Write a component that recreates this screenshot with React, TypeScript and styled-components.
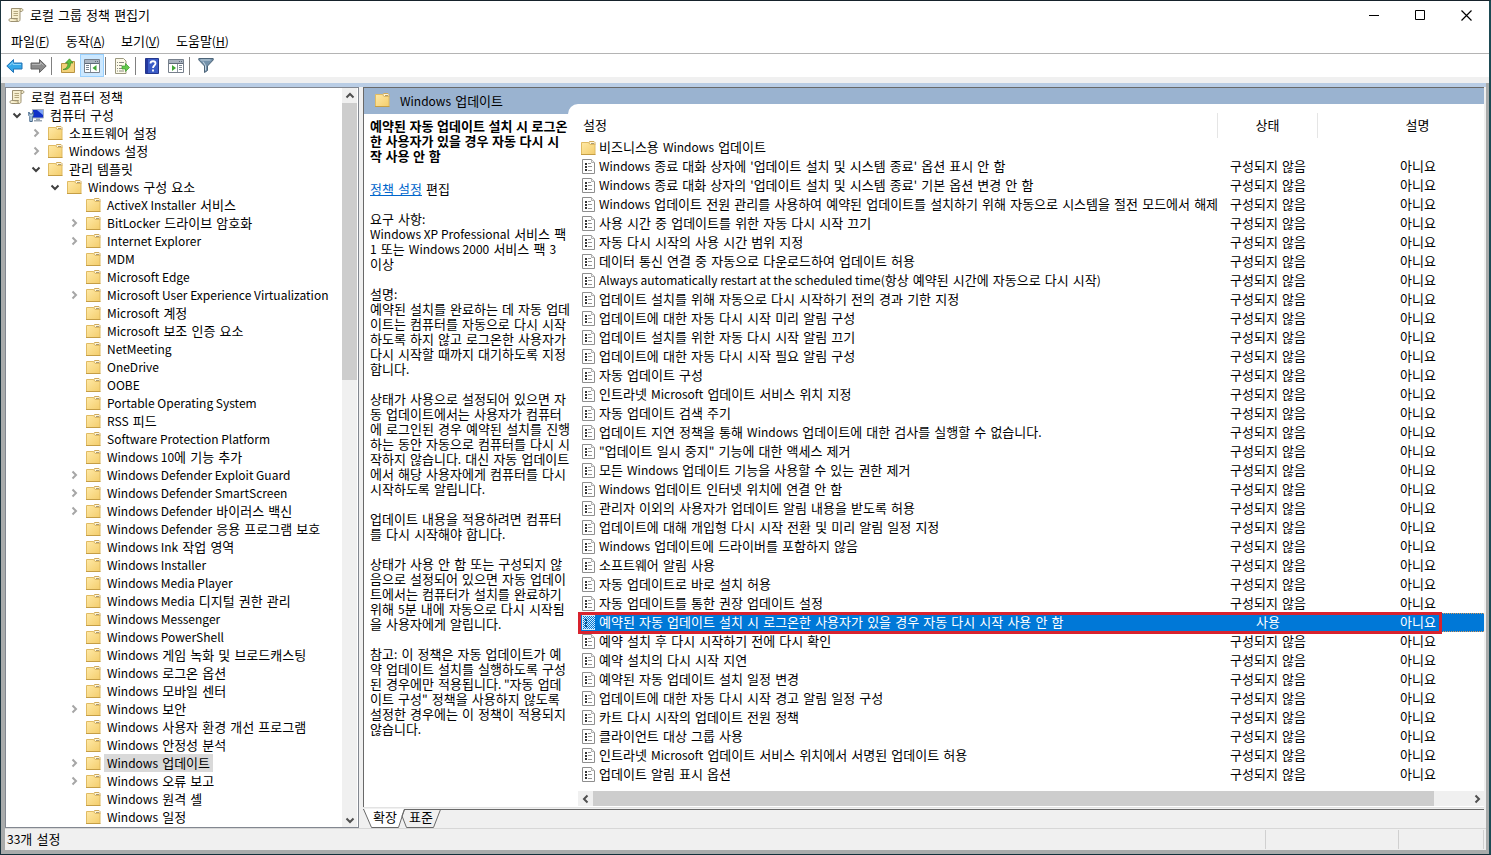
import React from "react";
import styled, { createGlobalStyle, css } from "styled-components";

const Global = createGlobalStyle`
  * { box-sizing: border-box; }
  html, body, #root { height: 100%; margin: 0; }
  body { overflow: hidden; }
  body, button {
    font-family: "DejaVu Sans", "Noto Sans CJK KR", sans-serif;
    font-size: 13px;
    color: #000;
  }
  button { border: 0; background: none; padding: 0; margin: 0; }
  svg { display: block; flex: none; }
`;

const Latin = styled.span`
  font-family: "Noto Sans CJK KR", sans-serif;
  font-size: 12px;
  line-height: 12px;
`;

const Window = styled.div`
  height: 100vh;
  display: flex;
  flex-direction: column;
  background: #fff;
  border-style: solid;
  border-width: 1px 2px 1px 1px;
  border-color: #16222b #1d4a54 #12303a #1c3540;
`;

const TitleBar = styled.header`
  height: 28px;
  flex: none;
  display: flex;
  align-items: center;
  padding-left: 7px;
`;

const Title = styled.h1`
  margin: 0;
  padding: 2px 0 0 6px;
  flex: 1;
  font-size: 13px;
  font-weight: 400;
  line-height: 18px;
`;

const Caption = styled.button`
  width: 46px;
  height: 28px;
  display: flex;
  align-items: center;
  justify-content: center;
`;

const MenuBar = styled.nav`
  height: 25px;
  flex: none;
  display: flex;
  padding-left: 2px;
  border-bottom: 1px solid #b4b4b4;
`;

const MenuButton = styled.button`
  padding: 2px 8px 0;
  line-height: 22px;
`;

const ToolBar = styled.div`
  height: 23px;
  flex: none;
  display: flex;
  align-items: center;
  padding-left: 1px;
`;

const Tool = styled.button<{ $on?: boolean }>`
  width: 24px;
  height: 23px;
  display: flex;
  align-items: center;
  justify-content: center;
  ${(p) => p.$on && css`background: #cce8ff; border: 1px solid #99d1ff;`}
`;

const ToolSep = styled.span`
  width: 1px;
  height: 18px;
  margin: 0 4px 0 1px;
  background: #808080;
`;

const Rebar = styled.div`
  height: 6px;
  flex: none;
  background: #f0f0f0;
`;

const Frame = styled.div`
  flex: 1;
  min-height: 0;
  display: flex;
  flex-direction: column;
  background: #f0f0f0;
  border: solid #a9abab;
  border-width: 0 3px 4px 4px;
`;

const BlueEdge = styled.div`
  height: 4px;
  flex: none;
  background: #b9cde5;
`;

const Body = styled.main`
  flex: 1;
  min-height: 0;
  display: flex;
  gap: 4px;
  padding-right: 2px;
`;

const TreePane = styled.section`
  width: 354px;
  flex: none;
  display: flex;
  padding-right: 1px;
  background: #fff;
  border: 1px solid #828790;
`;

const Tree = styled.ul`
  flex: 1;
  min-width: 0;
  margin: 0;
  padding: 0;
  list-style: none;
  overflow: hidden;
`;

const TreeItem = styled.li<{ $level: number }>`
  height: 18px;
  display: flex;
  align-items: center;
  padding-left: ${(p) => (p.$level ? p.$level * 19 - 18 : 3)}px;
  white-space: nowrap;
`;

const Twisty = styled.span`
  width: 19px;
  margin-right: 2px;
  display: flex;
  justify-content: center;
`;

const TreeLabel = styled.span<{ $selected?: boolean }>`
  margin-left: 3px;
  padding: 2px 3px 0;
  line-height: 16px;
  background: ${(p) => (p.$selected ? "#d9d9d9" : "transparent")};
`;

const ScrollBar = styled.div<{ $horizontal?: boolean }>`
  display: flex;
  flex: none;
  background: #f0f0f0;
  ${(p) =>
    p.$horizontal
      ? css`height: 15px;`
      : css`flex-direction: column; width: 15px;`}
`;

const ScrollArrow = styled.button`
  flex: none;
  min-width: 15px;
  height: 15px;
  display: flex;
  align-items: center;
  justify-content: center;
`;

const Track = styled.div<{ $horizontal?: boolean }>`
  flex: 1;
  display: flex;
  flex-direction: ${(p) => (p.$horizontal ? "row" : "column")};
`;

const Thumb = styled.div<{ $share: number }>`
  flex: 0 0 ${(p) => p.$share}%;
  background: #cdcdcd;
`;

const ResultPane = styled.section`
  flex: 1;
  min-width: 0;
  display: flex;
  flex-direction: column;
`;

const Sheet = styled.div`
  flex: 1;
  min-height: 0;
  display: flex;
  background: #9ab3d0;
  border: solid #696969;
  border-width: 1px 0 0 1px;
`;

const Detail = styled.article`
  width: 204px;
  flex: none;
  display: flex;
  flex-direction: column;
  z-index: 1;
`;

const DetailHead = styled.div`
  height: 26px;
  flex: none;
  display: flex;
  align-items: center;
  gap: 10px;
  padding: 0 0 2px 10px;
`;

const DetailBody = styled.div`
  flex: 1;
  background: #fff;
  padding: 5px 0 0 6px;
  line-height: 15px;
  white-space: pre;
`;

const DetailTitle = styled.h2`
  margin: 0 0 18px;
  font-family: "Liberation Sans", "Noto Sans CJK KR", sans-serif;
  font-size: 13px;
  font-weight: 700;
  line-height: 15px;
`;

const Paragraph = styled.p`
  margin: 0 0 15px;
`;

const Line = styled.span`
  display: block;
  height: 15px;
`;

const EditLink = styled.a`
  color: #0066cc;
  text-decoration: underline;
`;

const ListPane = styled.div`
  flex: 1;
  min-width: 0;
  margin-top: 16px;
  padding: 0 0 1px 10px;
  display: flex;
  flex-direction: column;
  background: #fff;
  border-top-left-radius: 10px;
`;

const ListView = styled.div`
  flex: 1;
  min-height: 0;
  overflow: hidden;
`;

const List = styled.table`
  width: calc(100% + 34px);
  table-layout: fixed;
  border-collapse: collapse;
  line-height: 19px;
`;

const HeadCell = styled.th<{ $width?: number; $name?: boolean }>`
  height: 34px;
  padding: ${(p) => (p.$name ? "0 0 0 5px" : "0")};
  width: ${(p) => (p.$width ? p.$width + "px" : "auto")};
  font-weight: 400;
  text-align: ${(p) => (p.$name ? "left" : "center")};
`;

const HeadLabel = styled.span<{ $rule?: boolean }>`
  display: block;
  margin-top: 9px;
  line-height: 25px;
  border-right: 1px solid ${(p) => (p.$rule ? "#e5e5e5" : "transparent")};
`;

const Row = styled.tr<{ $selected?: boolean }>`
  height: 19px;
  ${(p) =>
    p.$selected &&
    css`
      background: #0078d7;
      color: #fff;
      outline: 1px dotted #d99a5a;
      outline-offset: -1px;
      position: relative;
    `}
`;

const Cell = styled.td`
  padding: 0;
  height: 19px;
  text-align: center;
  white-space: nowrap;
`;

const NameBox = styled.span`
  height: 19px;
  display: flex;
  align-items: center;
  gap: 3px;
  padding-left: 2px;
  overflow: hidden;
`;

const Marker = styled.span`
  position: absolute;
  top: -1px;
  left: 0;
  right: 76px;
  height: 22px;
  border: 3px solid #d8232e;
`;

const TabStrip = styled.div`
  height: 21px;
  flex: none;
  display: flex;
  border-top: 1px solid #e3e3e3;
`;

const TabRow = styled.div`
  flex: 1;
  display: flex;
  margin-top: 1px;
  border-top: 1px solid #696969;
`;

const Tab = styled.button`
  position: relative;
  width: 42px;
  height: 18px;
  padding: 0 0 2px 2px;
  line-height: 16px;
  & + & { margin-left: -6px; }
`;

const TabShape = styled.svg`
  position: absolute;
  left: 0;
  top: -1px;
`;

const TabText = styled.span`
  position: relative;
`;

const StatusBar = styled.footer`
  height: 22px;
  flex: none;
  display: flex;
  padding: 1px 2px 1px 2px;
  border-top: 1px solid #d7d7d7;
`;

const StatusCell = styled.div<{ $width?: number }>`
  flex: ${(p) => (p.$width ? `0 0 ${p.$width}px` : "1")};
  line-height: 19px;
  border-right: 1px solid #d0d0d0;
`;

/* Sets the Latin runs of a mixed Korean string in their own size. */
const Mixed = ({ text }: { text: string }) => (
  <span>
    {text.split(/([!-~]+(?: [!-~]+)*)/).map((part, i) => (i % 2 ? <Latin key={i}>{part}</Latin> : part))}
  </span>
);

const Folder = () => (
  <svg width="16" height="16" viewBox="-1 0 16 16">
    <defs>
      <linearGradient id="fold" x1="0" y1="0" x2="1" y2="1">
        <stop offset="0" stopColor="#ffe9a6" />
        <stop offset="1" stopColor="#f3cd6c" />
      </linearGradient>
    </defs>
    <path d="M8 4V2l.5-.5h4.500l1 1V5" fill="#fff6d6" stroke="#cfa95a" />
    <path d="M.5 2.500h7l1.500 2h5v10H.5z" fill="url(#fold)" stroke="#e0bb63" />
    <path d="M10 3.500h3" stroke="#a99a78" />
    <path d="M0 14.500h14.500" stroke="#c59e45" />
  </svg>
);

const Scroll = () => (
  <svg width="16" height="16" viewBox="0 0 16 16">
    <path d="M3.500 1.500H13c2.500 0 2.500 3 0 3h-1v8c0 1.500-1 2-2 2H2.500c-2 0-2-3 0-3h1z" fill="#f7efcf" stroke="#9c9172" />
    <path d="M12 4.500V3c0-1 .5-1.500 1.500-1.500M3 11.500h6.500c-1 1-.5 2.500.5 3" fill="#e0d3a5" stroke="#9c9172" />
    <path d="M5.500 4.500h4.500M5.500 6.500h4.500M5.500 8.500h4.500" stroke="#b5a87f" />
  </svg>
);

const Computer = () => (
  <svg width="16" height="16" viewBox="0 0 16 16">
    <path d="M4.500 2.500h11v8.500h-11z" fill="#1030c8" stroke="#a7b0bd" />
    <path d="M9 3h6v5z" fill="#7fa5f5" />
    <path d="M8 11.500h4V13h2v1.500H6V13h2z" fill="#9aa5b1" />
    <path d="M.8 5v3.500l1 1V14.500h2.500V9.500l1-1V5L4 7H2z" fill="#b5cfe6" stroke="#47698a" />
  </svg>
);

const Policy = ({ selected }: { selected?: boolean }) => (
  <svg width="16" height="15" viewBox="-2 0 16 15">
    <defs>
      <pattern id="dither" width="2" height="2" patternUnits="userSpaceOnUse">
        <path d="M0 0h1v1H0zM1 1h1v1H1z" fill="#0078d7" />
      </pattern>
    </defs>
    <path d="M.5.5h9l3 3v11H.5z" fill="#fff" stroke="#8e8e8e" />
    <path d="M9.500.5v3h3" fill="#eee" stroke="#b0b0b0" />
    <path d="M3 4h2v2H3zM3 7h2v2H3zM3 10h2v2H3z" fill="#333" />
    <path d="M6 4.500h3M6 7.500h4M6 11.500h4" stroke="#929292" />
    {selected && <path d="M0 0h13v15H0z" fill="#d5ebfa" />}
    {selected && <path d="M1 1h12v13H1z" fill="url(#dither)" />}
    {selected && <path d="M3 4h2v2H3zM3 7h2v2H3zM3 10h2v2H3z" fill="#0b4f86" />}
  </svg>
);

const Chevron = ({ dir, color = "#505050", w = 2 }: { dir: "up" | "down" | "left" | "right"; color?: string; w?: number }) => {
  const d = {
    up: "M1.500 6.500 5 3l3.500 3.500",
    down: "M1.500 3.500 5 7l3.500-3.500",
    left: "M6.500 1.500 3 5l3.500 3.500",
    right: "M3.500 1.500 7 5l-3.500 3.500",
  }[dir];
  return (
    <svg width="10" height="10" viewBox="0 0 10 10">
      <path d={d} fill="none" stroke={color} strokeWidth={w} />
    </svg>
  );
};

const Arrow = ({ back }: { back?: boolean }) => (
  <svg width="17" height="16" viewBox="0 0 17 16">
    <path
      d={back ? "M.8 8 7.500 1.500V5h8.500v6H7.500v3.500z" : "M16.200 8 9.500 1.500V5H1v6h8.500v3.500z"}
      fill={back ? "#35a7e8" : "#8b8b8b"}
      stroke={back ? "#2273b5" : "#646464"}
    />
    <path d={back ? "M3.500 7.500 7 4.500v2h8" : "M2 6.500h8.500v-2l3 3"} fill="none" stroke={back ? "#8ed4f8" : "#b5b5b5"} />
  </svg>
);

const UpFolder = () => (
  <svg width="16" height="16" viewBox="0 0 16 16">
    <path d="M1.500 5.500h6l1.500-2h5.500v11h-13z" fill="#f3d27a" stroke="#b99342" />
    <path d="M3 11.500C6 11 8 9 8 5H5.500L9.500.8 13 5h-2.500c0 5-3 7-7.500 6.500z" fill="#5fc13c" stroke="#3a8a25" strokeWidth=".7" />
  </svg>
);

const Panes = ({ right }: { right?: boolean }) => (
  <svg width="16" height="14" viewBox="0 0 16 14">
    <path d="M.5.5h15v13H.5z" fill="#fff" stroke="#77808c" />
    <path d="M1 1h14v3H1z" fill="#a9b3c0" />
    <path d="M1 4.500h14M11 2.500h1M13 2.500h1" stroke="#5f6a78" />
    <path d={right ? "M9.500 5v8" : "M6.500 5v8"} stroke="#8a94a0" />
    <path d={right ? "M11 6.500h3M11 8.500h3M11 10.500h3" : "M2 6.500h3M2 8.500h3M2 10.500h3"} stroke="#7b8794" />
    <path d={right ? "M4 6v6l4-3z" : "M12.500 6v6l-4-3z"} fill="#3fa535" />
  </svg>
);

const Export = () => (
  <svg width="16" height="16" viewBox="0 0 16 16">
    <path d="M1.500.5h8l2.500 2.500v12.500H1.500z" fill="#fdfbea" stroke="#9b987f" />
    <path d="M3 4.500h1M5 4.500h5M3 7.500h1M5 7.500h3M3 10.500h1M5 10.500h3M3 13h1M5 13h5" stroke="#8a8a80" />
    <path d="M8 8h3.500V5.500l4 4-4 4V11H8z" fill="#63c94a" stroke="#3b9a2c" strokeWidth=".7" />
  </svg>
);

const Help = () => (
  <svg width="14" height="16" viewBox="0 0 14 16">
    <path d="M.5.5h13v15H.5z" fill="#3a5bc6" stroke="#24378c" />
    <path d="M1 1h2v14H1z" fill="#2438a0" />
    <path d="M5.500 5.500c0-3 5-3 5 0 0 2-2.500 2-2.500 4.500M8 11.500v2" fill="none" stroke="#fff" strokeWidth="1.800" />
  </svg>
);

const Funnel = () => (
  <svg width="16" height="15" viewBox="0 0 16 15">
    <path d="M.8.5h14.400v1.500L9.500 8v4.500l-3 2V8L.8 2z" fill="#7391aa" stroke="#4d6478" />
    <path d="M2.500 2h10M5 3.500l2.500 4v5" fill="none" stroke="#c7d6e2" />
  </svg>
);

type Node = [number, string, ("open" | "closed")?];
const tree: Node[] = [
  [0, "로컬 컴퓨터 정책"],
  [1, "컴퓨터 구성", "open"],
  [2, "소프트웨어 설정", "closed"],
  [2, "Windows 설정", "closed"],
  [2, "관리 템플릿", "open"],
  [3, "Windows 구성 요소", "open"],
  [4, "ActiveX Installer 서비스"],
  [4, "BitLocker 드라이브 암호화", "closed"],
  [4, "Internet Explorer", "closed"],
  [4, "MDM"],
  [4, "Microsoft Edge"],
  [4, "Microsoft User Experience Virtualization", "closed"],
  [4, "Microsoft 계정"],
  [4, "Microsoft 보조 인증 요소"],
  [4, "NetMeeting"],
  [4, "OneDrive"],
  [4, "OOBE"],
  [4, "Portable Operating System"],
  [4, "RSS 피드"],
  [4, "Software Protection Platform"],
  [4, "Windows 10에 기능 추가"],
  [4, "Windows Defender Exploit Guard", "closed"],
  [4, "Windows Defender SmartScreen", "closed"],
  [4, "Windows Defender 바이러스 백신", "closed"],
  [4, "Windows Defender 응용 프로그램 보호"],
  [4, "Windows Ink 작업 영역"],
  [4, "Windows Installer"],
  [4, "Windows Media Player"],
  [4, "Windows Media 디지털 권한 관리"],
  [4, "Windows Messenger"],
  [4, "Windows PowerShell"],
  [4, "Windows 게임 녹화 및 브로드캐스팅"],
  [4, "Windows 로그온 옵션"],
  [4, "Windows 모바일 센터"],
  [4, "Windows 보안", "closed"],
  [4, "Windows 사용자 환경 개선 프로그램"],
  [4, "Windows 안정성 분석"],
  [4, "Windows 업데이트", "closed"],
  [4, "Windows 오류 보고", "closed"],
  [4, "Windows 원격 셸"],
  [4, "Windows 일정"],
];
const currentNode = "Windows 업데이트";

const policies = [
  "Windows 종료 대화 상자에 '업데이트 설치 및 시스템 종료' 옵션 표시 안 함",
  "Windows 종료 대화 상자의 '업데이트 설치 및 시스템 종료' 기본 옵션 변경 안 함",
  "Windows 업데이트 전원 관리를 사용하여 예약된 업데이트를 설치하기 위해 자동으로 시스템을 절전 모드에서 해제",
  "사용 시간 중 업데이트를 위한 자동 다시 시작 끄기",
  "자동 다시 시작의 사용 시간 범위 지정",
  "데이터 통신 연결 중 자동으로 다운로드하여 업데이트 허용",
  "Always automatically restart at the scheduled time(항상 예약된 시간에 자동으로 다시 시작)",
  "업데이트 설치를 위해 자동으로 다시 시작하기 전의 경과 기한 지정",
  "업데이트에 대한 자동 다시 시작 미리 알림 구성",
  "업데이트 설치를 위한 자동 다시 시작 알림 끄기",
  "업데이트에 대한 자동 다시 시작 필요 알림 구성",
  "자동 업데이트 구성",
  "인트라넷 Microsoft 업데이트 서비스 위치 지정",
  "자동 업데이트 검색 주기",
  "업데이트 지연 정책을 통해 Windows 업데이트에 대한 검사를 실행할 수 없습니다.",
  "\"업데이트 일시 중지\" 기능에 대한 액세스 제거",
  "모든 Windows 업데이트 기능을 사용할 수 있는 권한 제거",
  "Windows 업데이트 인터넷 위치에 연결 안 함",
  "관리자 이외의 사용자가 업데이트 알림 내용을 받도록 허용",
  "업데이트에 대해 개입형 다시 시작 전환 및 미리 알림 일정 지정",
  "Windows 업데이트에 드라이버를 포함하지 않음",
  "소프트웨어 알림 사용",
  "자동 업데이트로 바로 설치 허용",
  "자동 업데이트를 통한 권장 업데이트 설정",
  "예약된 자동 업데이트 설치 시 로그온한 사용자가 있을 경우 자동 다시 시작 사용 안 함",
  "예약 설치 후 다시 시작하기 전에 다시 확인",
  "예약 설치의 다시 시작 지연",
  "예약된 자동 업데이트 설치 일정 변경",
  "업데이트에 대한 자동 다시 시작 경고 알림 일정 구성",
  "카트 다시 시작의 업데이트 전원 정책",
  "클라이언트 대상 그룹 사용",
  "인트라넷 Microsoft 업데이트 서비스 위치에서 서명된 업데이트 허용",
  "업데이트 알림 표시 옵션",
];
const enabledPolicy = 24;

const paragraphs = [
  "요구 사항:\nWindows XP Professional 서비스 팩\n1 또는 Windows 2000 서비스 팩 3\n이상",
  "설명:\n예약된 설치를 완료하는 데 자동 업데\n이트는 컴퓨터를 자동으로 다시 시작\n하도록 하지 않고 로그온한 사용자가\n다시 시작할 때까지 대기하도록 지정\n합니다.",
  "상태가 사용으로 설정되어 있으면 자\n동 업데이트에서는 사용자가 컴퓨터\n에 로그인된 경우 예약된 설치를 진행\n하는 동안 자동으로 컴퓨터를 다시 시\n작하지 않습니다. 대신 자동 업데이트\n에서 해당 사용자에게 컴퓨터를 다시\n시작하도록 알립니다.",
  "업데이트 내용을 적용하려면 컴퓨터\n를 다시 시작해야 합니다.",
  "상태가 사용 안 함 또는 구성되지 않\n음으로 설정되어 있으면 자동 업데이\n트에서는 컴퓨터가 설치를 완료하기\n위해 5분 내에 자동으로 다시 시작됨\n을 사용자에게 알립니다.",
  "참고: 이 정책은 자동 업데이트가 예\n약 업데이트 설치를 실행하도록 구성\n된 경우에만 적용됩니다. \"자동 업데\n이트 구성\" 정책을 사용하지 않도록\n설정한 경우에는 이 정책이 적용되지\n않습니다.",
];

const menus = [["파일", "F"], ["동작", "A"], ["보기", "V"], ["도움말", "H"]];

export default function App() {
  return (
    <Window>
      <Global />
      <TitleBar>
        <Scroll />
        <Title>로컬 그룹 정책 편집기</Title>
        <Caption aria-label="최소화">
          <svg width="11" height="11"><path d="M0 5.500h10" stroke="#000" /></svg>
        </Caption>
        <Caption aria-label="최대화">
          <svg width="11" height="11"><path d="M.5.5h9v9h-9z" fill="none" stroke="#000" /></svg>
        </Caption>
        <Caption aria-label="닫기">
          <svg width="11" height="11"><path d="m.5.5 10 10m0-10-10 10" stroke="#000" strokeWidth="1.200" /></svg>
        </Caption>
      </TitleBar>
      <MenuBar>
        {menus.map(([name, key]) => (
          <MenuButton key={key}>{name}<Latin>(<u>{key}</u>)</Latin></MenuButton>
        ))}
      </MenuBar>
      <ToolBar>
        <Tool aria-label="뒤로"><Arrow back /></Tool>
        <Tool aria-label="앞으로"><Arrow /></Tool>
        <ToolSep />
        <Tool aria-label="한 수준 위로"><UpFolder /></Tool>
        <Tool aria-label="콘솔 트리 표시" $on><Panes /></Tool>
        <ToolSep />
        <Tool aria-label="목록 내보내기"><Export /></Tool>
        <ToolSep />
        <Tool aria-label="도움말"><Help /></Tool>
        <Tool aria-label="작업 창 표시"><Panes right /></Tool>
        <ToolSep />
        <Tool aria-label="필터"><Funnel /></Tool>
      </ToolBar>
      <Rebar />
      <Frame>
        <BlueEdge />
        <Body>
          <TreePane>
            <Tree role="tree">
              {tree.map(([level, label, state]) => (
                <TreeItem key={label} $level={level} role="treeitem" aria-level={level + 1}>
                  {level > 0 && (
                    <Twisty>
                      {state === "open" && <Chevron dir="down" color="#404040" />}
                      {state === "closed" && <Chevron dir="right" color="#a6a6a6" />}
                    </Twisty>
                  )}
                  {level === 0 ? <Scroll /> : level === 1 ? <Computer /> : <Folder />}
                  <TreeLabel $selected={label === currentNode}><Mixed text={label} /></TreeLabel>
                </TreeItem>
              ))}
            </Tree>
            <ScrollBar>
              <ScrollArrow aria-label="위로 스크롤"><Chevron dir="up" /></ScrollArrow>
              <Track><Thumb $share={39} /></Track>
              <ScrollArrow aria-label="아래로 스크롤"><Chevron dir="down" /></ScrollArrow>
            </ScrollBar>
          </TreePane>
          <ResultPane>
            <Sheet>
              <Detail>
                <DetailHead><Folder /><Mixed text={currentNode} /></DetailHead>
                <DetailBody>
                  <DetailTitle>{"예약된 자동 업데이트 설치 시 로그온\n한 사용자가 있을 경우 자동 다시 시\n작 사용 안 함"}</DetailTitle>
                  <Paragraph><EditLink href="#edit">정책 설정</EditLink> 편집</Paragraph>
                  {paragraphs.map((text) => (
                    <Paragraph key={text}>
                      {text.split("\n").map((line) => <Line key={line}><Mixed text={line} /></Line>)}
                    </Paragraph>
                  ))}
                </DetailBody>
              </Detail>
              <ListPane>
                <ListView>
                  <List>
                    <thead>
                      <tr>
                        <HeadCell $name><HeadLabel $rule>설정</HeadLabel></HeadCell>
                        <HeadCell $width={100}><HeadLabel $rule>상태</HeadLabel></HeadCell>
                        <HeadCell $width={200}><HeadLabel>설명</HeadLabel></HeadCell>
                      </tr>
                    </thead>
                    <tbody>
                      <Row>
                        <Cell><NameBox><Folder /><Mixed text="비즈니스용 Windows 업데이트" /></NameBox></Cell>
                        <Cell />
                        <Cell />
                      </Row>
                      {policies.map((name, i) => (
                        <Row key={name} $selected={i === enabledPolicy}>
                          <Cell>
                            <NameBox><Policy selected={i === enabledPolicy} /><Mixed text={name} /></NameBox>
                            {i === enabledPolicy && <Marker />}
                          </Cell>
                          <Cell>{i === enabledPolicy ? "사용" : "구성되지 않음"}</Cell>
                          <Cell>아니요</Cell>
                        </Row>
                      ))}
                    </tbody>
                  </List>
                </ListView>
                <ScrollBar $horizontal>
                  <ScrollArrow aria-label="왼쪽으로 스크롤"><Chevron dir="left" /></ScrollArrow>
                  <Track $horizontal><Thumb $share={96} /></Track>
                  <ScrollArrow aria-label="오른쪽으로 스크롤"><Chevron dir="right" /></ScrollArrow>
                </ScrollBar>
              </ListPane>
            </Sheet>
            <TabStrip>
              <TabRow>
                <Tab>
                  <TabShape width="42" height="19">
                    <path d="M.5 0 8.500 18.500h27L41.500 0" fill="#fff" stroke="#696969" />
                  </TabShape>
                  <TabText>확장</TabText>
                </Tab>
                <Tab>
                  <TabShape width="42" height="19">
                    <path d="M5.500.500 3 7l4.500 11.500h27L41.500.5" fill="none" stroke="#696969" />
                  </TabShape>
                  <TabText>표준</TabText>
                </Tab>
              </TabRow>
            </TabStrip>
          </ResultPane>
        </Body>
        <StatusBar>
          <StatusCell><Mixed text="33개 설정" /></StatusCell>
          <StatusCell $width={133} />
          <StatusCell $width={85} />
        </StatusBar>
      </Frame>
    </Window>
  );
}
